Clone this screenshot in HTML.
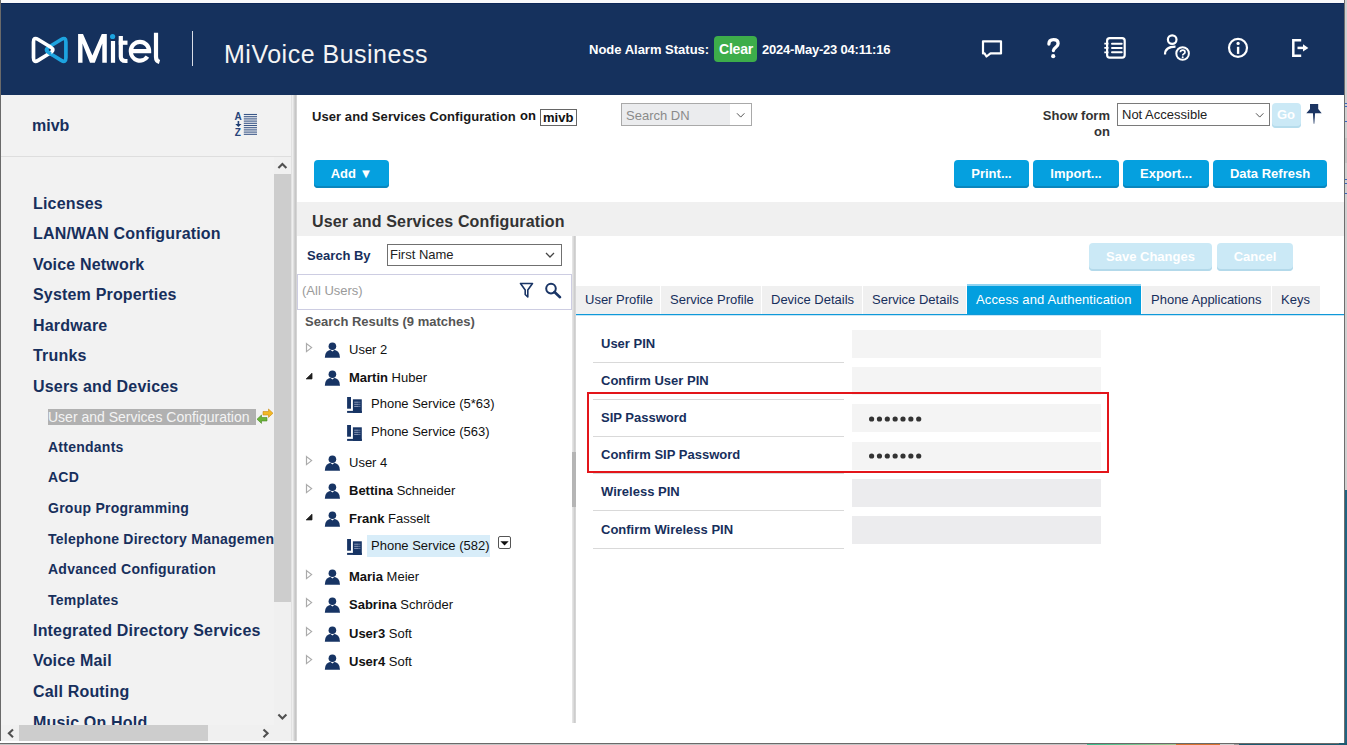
<!DOCTYPE html>
<html><head><meta charset="utf-8">
<style>
*{box-sizing:border-box;margin:0;padding:0}
html,body{width:1347px;height:745px;overflow:hidden;background:#fff;font-family:"Liberation Sans",sans-serif;position:relative}
.a{position:absolute}
.t{position:absolute;white-space:nowrap;line-height:1}
</style></head><body>
<div class="a" style="left:0px;top:0px;width:1347px;height:3px;background:#f8f8fa"></div>
<div class="a" style="left:1px;top:3px;width:1343px;height:92px;background:#15315d"></div>
<div class="a" style="left:1px;top:3px;width:1343px;height:1px;background:#0b2657"></div>
<div class="a" style="left:0px;top:0px;width:1px;height:745px;background:#6a6a6a"></div>
<div class="a" style="left:1344px;top:0px;width:1px;height:745px;background:#6e6e6e"></div>
<div class="a" style="left:1345px;top:0px;width:2px;height:745px;background:#d0d0d0"></div>
<div class="a" style="left:1345px;top:138px;width:2px;height:25px;background:#c2c2c2"></div>
<div class="a" style="left:1345px;top:103px;width:2px;height:1px;background:#3a66c0"></div>
<div class="a" style="left:1345px;top:106px;width:2px;height:1px;background:#3a66c0"></div>
<div class="a" style="left:1345px;top:121px;width:2px;height:1px;background:#3a66c0"></div>
<div class="a" style="left:1345px;top:179px;width:2px;height:1px;background:#3a66c0"></div>
<div class="a" style="left:1345px;top:183px;width:2px;height:1px;background:#3a66c0"></div>
<div class="a" style="left:1345px;top:193px;width:2px;height:1px;background:#3a66c0"></div>
<div class="a" style="left:1345px;top:490px;width:2px;height:255px;background:#1f6380"></div>
<svg class="a" style="left:28px;top:32px" width="44" height="34" viewBox="0 0 44 34">
<path d="M37.90,10.10 L37.90,25.70 Q37.90,31.20 33.21,28.33 L20.89,20.77 Q16.20,17.90 20.89,15.03 L33.21,7.47 Q37.90,4.60 37.90,10.10 Z" fill="none" stroke="#1da4e0" stroke-width="3.7"/>
<path d="M10.19,7.47 L22.51,15.03 Q27.20,17.90 22.51,20.77 L10.19,28.33 Q5.50,31.20 5.50,25.70 L5.50,10.10 Q5.50,4.60 10.19,7.47 Z" fill="none" stroke="#fff" stroke-width="3.7"/>
<clipPath id="lc"><rect x="12" y="17.6" width="11.5" height="10"/></clipPath><path d="M37.90,10.10 L37.90,25.70 Q37.90,31.20 33.21,28.33 L20.89,20.77 Q16.20,17.90 20.89,15.03 L33.21,7.47 Q37.90,4.60 37.90,10.10 Z" fill="none" stroke="#1da4e0" stroke-width="3.7" clip-path="url(#lc)"/>
</svg>
<svg class="a" style="left:74px;top:28px" width="92" height="40" viewBox="0 0 92 40">
<path d="M4.1,34.8 V6.1 H9 L18.4,27.5 L27.8,6.1 H32.8 V34.8 H28.3 V15.5 L20.8,34.8 H16 L8.5,15.5 V34.8 Z" fill="#fff"/>
<g fill="none" stroke="#fff" stroke-width="4.2">
<path d="M39,13 V34.8"/>
<path d="M46.8,8 V28.5 Q46.8,33 51.5,33 H53.5"/>
<path d="M44.8,14.7 H53.5"/>
<path d="M56.8,23.2 H75.1 A9.15,9.4 0 0 0 56.8,23.2 A9.15,9.4 0 0 0 73.45,28.6"/>
<path d="M82,4.8 V29 Q82,33 85.5,34"/>
</g>
<circle cx="38.6" cy="8.5" r="2.6" fill="#1da4e0"/>
</svg>
<div class="a" style="left:192px;top:31px;width:1px;height:35px;background:#d8dde6"></div>
<div class="t" style="left:224px;top:42px;font-size:25px;color:#f4f4f4;letter-spacing:0.5px">MiVoice Business</div>
<div class="t" style="left:589px;top:43px;font-size:13px;color:#fff;font-weight:bold;">Node Alarm Status:</div>
<div class="a" style="left:714px;top:36px;width:43px;height:26px;background:#3dad4a;border-radius:4px"></div>
<div class="t" style="left:719px;top:42px;font-size:14px;color:#fff;font-weight:bold;letter-spacing:-0.2px">Clear</div>
<div class="t" style="left:762px;top:43px;font-size:13px;color:#fff;font-weight:bold;letter-spacing:-0.2px">2024-May-23 04:11:16</div>
<svg class="a" style="left:970px;top:28px" width="350" height="40" viewBox="970 28 350 40">
<g fill="none" stroke="#fff" stroke-width="2.2">
<path d="M984.5,53.4 H983 V41.3 H1001 V53.4 H990.5 L986.5,56.5 Z" stroke-linejoin="round"/>
<rect x="1107.1" y="38.1" width="17.6" height="19.6" rx="2.6"/>
<path d="M1112,43.7 H1121.7 M1112,47.9 H1121.7 M1112,52.3 H1121.7" stroke-width="2" stroke-linecap="round"/>
<path d="M1104.3,43.7 H1108.5 M1104.3,47.9 H1108.5 M1104.3,52.3 H1108.5" stroke-width="1.8"/>
<circle cx="1172.2" cy="39.6" r="4.3"/>
<path d="M1165,54.5 Q1165,46.6 1175.5,46.6"/>
<circle cx="1182.6" cy="53.5" r="6.3" stroke-width="2"/>
<circle cx="1238" cy="47.85" r="9" />
<path d="M1238.1,46.8 V53.9" stroke-width="2.4"/>
<path d="M1301.2,40.2 H1293.3 V55.8 H1301.2" stroke-width="2.5"/>
<path d="M1297.5,47.9 H1304.5" stroke-width="2.5"/>
</g>
<g fill="#fff">
<circle cx="1238.1" cy="43.4" r="1.6"/>
<path d="M1303,44.3 L1308.4,47.9 L1303,51.5 Z"/>
<circle cx="1182.7" cy="57.2" r="1"/>
</g>
<path d="M1180.4,52.3 Q1180.4,50.2 1182.7,50.2 Q1185,50.2 1185,52.2 Q1185,53.4 1183.6,54 Q1182.7,54.4 1182.7,55.5" fill="none" stroke="#fff" stroke-width="1.7"/>
</svg>
<svg class="a" style="left:1040px;top:34px" width="28" height="28" viewBox="1040 34 28 28"><path d="M1048.9,44 Q1048.9,39.6 1053.5,39.6 Q1058.1,39.6 1058.1,43.4 Q1058.1,45.5 1055.8,47.3 Q1053.4,49.2 1053.4,50.4 V50.6" fill="none" stroke="#fff" stroke-width="3.3" stroke-linecap="round"/><circle cx="1053.2" cy="56.2" r="2.1" fill="#fff"/></svg>
<div class="a" style="left:1px;top:95px;width:291px;height:646px;background:#f2f2f2"></div>
<div class="a" style="left:1px;top:156px;width:290px;height:1px;background:#dedede"></div>
<div class="t" style="left:32px;top:118px;font-size:16px;color:#172f5c;font-weight:bold;">mivb</div>
<svg class="a" style="left:232px;top:110px" width="28" height="28" viewBox="232 110 28 28">
<text x="234.6" y="120" font-family="Liberation Sans" font-weight="bold" font-size="10" fill="#27457a">A</text>
<text x="234.8" y="136" font-family="Liberation Sans" font-weight="bold" font-size="10" fill="#27457a">Z</text>
<path d="M238.4,121 V124.5" stroke="#27457a" stroke-width="1.6"/>
<path d="M235.3,124 H241.5 L238.4,127 Z" fill="#1c3a70"/>
<g stroke="#3a5788" stroke-width="1.1">
<path d="M243.8,114.5 H257"/><path d="M243.8,116.7 H257"/><path d="M243.8,118.9 H257"/><path d="M243.8,121.1 H257"/><path d="M243.8,123.3 H257"/><path d="M243.8,125.5 H257"/><path d="M243.8,127.7 H257"/><path d="M243.8,129.9 H257"/><path d="M243.8,132.1 H257"/><path d="M243.8,134.3 H257"/>
</g></svg>
<div class="a" style="left:1px;top:157px;width:273px;height:568px;overflow:hidden">
<div class="t" style="left:32px;top:39px;font-size:16px;color:#172f5c;font-weight:bold;letter-spacing:0.18px">Licenses</div>
<div class="t" style="left:32px;top:69px;font-size:16px;color:#172f5c;font-weight:bold;letter-spacing:0.18px">LAN/WAN Configuration</div>
<div class="t" style="left:32px;top:100px;font-size:16px;color:#172f5c;font-weight:bold;letter-spacing:0.18px">Voice Network</div>
<div class="t" style="left:32px;top:130px;font-size:16px;color:#172f5c;font-weight:bold;letter-spacing:0.18px">System Properties</div>
<div class="t" style="left:32px;top:161px;font-size:16px;color:#172f5c;font-weight:bold;letter-spacing:0.18px">Hardware</div>
<div class="t" style="left:32px;top:191px;font-size:16px;color:#172f5c;font-weight:bold;letter-spacing:0.18px">Trunks</div>
<div class="t" style="left:32px;top:222px;font-size:16px;color:#172f5c;font-weight:bold;letter-spacing:0.18px">Users and Devices</div>
<div class="a" style="left:47px;top:252px;width:208px;height:16px;background:#b1b1b1"></div>
<div class="t" style="left:47px;top:253px;font-size:14px;color:#f4f4f4">User and Services Configuration</div>
<svg class="a" style="left:255px;top:251px" width="18" height="18" viewBox="0 0 18 18">
<path d="M7,3.5 H12.5 V1 L17,5.2 L12.5,9.4 V7 H7 Z" fill="#f2b826" stroke="#c98a10" stroke-width="0.6"/>
<path d="M11,9.5 H5.5 V7 L1,11.2 L5.5,15.4 V13 H11 Z" fill="#6bb33a" stroke="#4a8a22" stroke-width="0.6"/>
</svg>
<div class="t" style="left:47px;top:283px;font-size:14px;color:#172f5c;font-weight:bold;letter-spacing:0.25px">Attendants</div>
<div class="t" style="left:47px;top:313px;font-size:14px;color:#172f5c;font-weight:bold;letter-spacing:0.25px">ACD</div>
<div class="t" style="left:47px;top:344px;font-size:14px;color:#172f5c;font-weight:bold;letter-spacing:0.25px">Group Programming</div>
<div class="t" style="left:47px;top:375px;font-size:14px;color:#172f5c;font-weight:bold;letter-spacing:0.25px">Telephone Directory Management</div>
<div class="t" style="left:47px;top:405px;font-size:14px;color:#172f5c;font-weight:bold;letter-spacing:0.25px">Advanced Configuration</div>
<div class="t" style="left:47px;top:436px;font-size:14px;color:#172f5c;font-weight:bold;letter-spacing:0.25px">Templates</div>
<div class="t" style="left:32px;top:466px;font-size:16px;color:#172f5c;font-weight:bold;letter-spacing:0.18px">Integrated Directory Services</div>
<div class="t" style="left:32px;top:496px;font-size:16px;color:#172f5c;font-weight:bold;letter-spacing:0.18px">Voice Mail</div>
<div class="t" style="left:32px;top:527px;font-size:16px;color:#172f5c;font-weight:bold;letter-spacing:0.18px">Call Routing</div>
<div class="t" style="left:32px;top:558px;font-size:16px;color:#172f5c;font-weight:bold;letter-spacing:0.18px">Music On Hold</div>
</div>
<div class="a" style="left:274px;top:157px;width:17px;height:568px;background:#f0f0f0"></div>
<div class="a" style="left:274px;top:174px;width:17px;height:428px;background:#cdcdcd"></div>
<svg class="a" style="left:274px;top:157px" width="17" height="568" viewBox="0 0 17 568">
<path d="M4.4,10.9 L8.4,6.9 L12.4,10.9" fill="none" stroke="#505050" stroke-width="2.1"/>
<path d="M4.4,557.6 L8.4,561.6 L12.4,557.6" fill="none" stroke="#505050" stroke-width="2.1"/>
</svg>
<div class="a" style="left:1px;top:725px;width:273px;height:16px;background:#f0f0f0"></div>
<div class="a" style="left:19px;top:725px;width:189px;height:16px;background:#cdcdcd"></div>
<svg class="a" style="left:1px;top:725px" width="273" height="16" viewBox="0 0 273 16">
<path d="M12,4.4 L7.9,8.3 L12,12.2" fill="none" stroke="#505050" stroke-width="2.1"/>
<path d="M262.5,4.4 L266.6,8.3 L262.5,12.2" fill="none" stroke="#505050" stroke-width="2.1"/>
</svg>
<div class="a" style="left:274px;top:725px;width:17px;height:16px;background:#f0f0f0"></div>
<div class="a" style="left:291px;top:95px;width:1px;height:648px;background:#e2e2e2"></div>
<div class="a" style="left:292px;top:95px;width:1px;height:648px;background:#eeeeee"></div>
<div class="a" style="left:293px;top:95px;width:1px;height:648px;background:#e0e0e0"></div>
<div class="a" style="left:294px;top:95px;width:1px;height:648px;background:#d0d0d0"></div>
<div class="a" style="left:295px;top:95px;width:1px;height:648px;background:#c6c6c6"></div>
<div class="a" style="left:296px;top:95px;width:1px;height:648px;background:#d4d4d4"></div>
<div class="t" style="left:312px;top:110px;font-size:13px;color:#1a1a1a;font-weight:bold;letter-spacing:0.07px">User and Services Configuration</div>
<div class="t" style="left:520px;top:109px;font-size:13px;color:#111;font-weight:bold;">on</div>
<div class="a" style="left:540px;top:109px;width:37px;height:17px;border:1px solid #666"></div>
<div class="t" style="left:543px;top:111px;font-size:13px;color:#111;font-weight:bold;">mivb</div>
<div class="a" style="left:621px;top:103px;width:131px;height:23px;border:1px solid #a9a9a9;background:#fff"></div>
<div class="a" style="left:622px;top:104px;width:108px;height:21px;background:#ebecee"></div>
<div class="t" style="left:626px;top:109px;font-size:13px;color:#8a8a8a;">Search DN</div>
<svg class="a" style="left:734px;top:110px" width="12" height="10" viewBox="0 0 12 10"><path d="M3,3.3 L6.7,7.1 L10.4,3.3" fill="none" stroke="#555" stroke-width="1"/></svg>
<div class="t" style="left:1010px;top:108px;width:100px;text-align:right;font-size:13px;line-height:16px;color:#333;font-weight:bold;white-space:normal">Show form<br>on</div>
<div class="a" style="left:1117px;top:103px;width:153px;height:23px;border:1px solid #7a7a7a;background:#fff"></div>
<div class="t" style="left:1122px;top:108px;font-size:13px;color:#222;">Not Accessible</div>
<svg class="a" style="left:1253px;top:110px" width="12" height="10" viewBox="0 0 12 10"><path d="M3,3.3 L6.7,7.1 L10.4,3.3" fill="none" stroke="#555" stroke-width="1"/></svg>
<div class="a" style="left:1272px;top:103px;width:29px;height:25px;background:#cbe9f6;border-radius:4px;box-shadow:inset 0 -2px 0 #b6dcec"></div>
<div class="t" style="left:1277px;top:108px;font-size:13px;color:#fff;font-weight:bold;">Go</div>
<svg class="a" style="left:1302px;top:100px" width="24" height="28" viewBox="1302 100 24 28">
<path d="M1310,104.1 H1318.2 V109 L1321.7,113.3 H1306.3 L1310,109 Z" fill="#1c3563"/>
<path d="M1312.9,113 H1315.1 L1314.3,123.7 H1313.7 Z" fill="#1c3563"/>
</svg>
<div class="a" style="left:314px;top:160px;width:75px;height:28px;background:#05a0df;border-radius:4px;box-shadow:inset 0 -2px 0 #0a86bd;color:#fff;font-weight:bold;font-size:13px;line-height:27px;text-align:center;white-space:nowrap">Add &#9660;</div>
<div class="a" style="left:954px;top:160px;width:75px;height:28px;background:#05a0df;border-radius:4px;box-shadow:inset 0 -2px 0 #0a86bd;color:#fff;font-weight:bold;font-size:13px;line-height:27px;text-align:center;white-space:nowrap">Print...</div>
<div class="a" style="left:1033px;top:160px;width:86px;height:28px;background:#05a0df;border-radius:4px;box-shadow:inset 0 -2px 0 #0a86bd;color:#fff;font-weight:bold;font-size:13px;line-height:27px;text-align:center;white-space:nowrap">Import...</div>
<div class="a" style="left:1123px;top:160px;width:86px;height:28px;background:#05a0df;border-radius:4px;box-shadow:inset 0 -2px 0 #0a86bd;color:#fff;font-weight:bold;font-size:13px;line-height:27px;text-align:center;white-space:nowrap">Export...</div>
<div class="a" style="left:1213px;top:160px;width:114px;height:28px;background:#05a0df;border-radius:4px;box-shadow:inset 0 -2px 0 #0a86bd;color:#fff;font-weight:bold;font-size:13px;line-height:27px;text-align:center;white-space:nowrap">Data Refresh</div>
<div class="a" style="left:297px;top:202px;width:1047px;height:34px;background:#f0f0f0"></div>
<div class="t" style="left:312px;top:214px;font-size:16px;color:#333;font-weight:bold;letter-spacing:0.15px">User and Services Configuration</div>
<div class="t" style="left:307px;top:249px;font-size:13px;color:#172f5c;font-weight:bold;">Search By</div>
<div class="a" style="left:387px;top:244px;width:175px;height:22px;border:1px solid #707070;background:#fff"></div>
<div class="t" style="left:390px;top:248px;font-size:13px;color:#222;">First Name</div>
<svg class="a" style="left:544px;top:250px" width="12" height="10" viewBox="0 0 12 10"><path d="M2,3 L6,7 L10,3" fill="none" stroke="#444" stroke-width="1.3"/></svg>
<div class="a" style="left:297px;top:274px;width:275px;height:36px;border:1px solid #cdcde2;background:#fff"></div>
<div class="t" style="left:302px;top:284px;font-size:13px;color:#9a9a9a;">(All Users)</div>
<svg class="a" style="left:516px;top:280px" width="50" height="22" viewBox="516 280 50 22">
<path d="M520.5,283.5 H532.5 L527.8,290 V297 L525.2,294.5 V290 Z" fill="none" stroke="#1a3566" stroke-width="1.6" stroke-linejoin="round"/>
<circle cx="551" cy="288.6" r="4.8" fill="none" stroke="#1a3566" stroke-width="2"/>
<path d="M554.5,292 L560,297.2" stroke="#1a3566" stroke-width="2.6" stroke-linecap="round"/>
</svg>
<div class="t" style="left:305px;top:315px;font-size:13px;color:#555;font-weight:bold;">Search Results (9 matches)</div>
<svg class="a" style="left:304px;top:341px" width="10" height="13" viewBox="304 341 10 13"><path d="M306.5,343.6 L311.6,347.6 L306.5,351.6 Z" fill="none" stroke="#aaaaaa" stroke-width="1.2"/></svg>
<svg class="a" style="left:323px;top:341px" width="19" height="19" viewBox="323 341 19 19">
<circle cx="332.4" cy="346.3" r="3.8" fill="#173464"/>
<path d="M324.8,357.8 Q324.8,349.8 332.4,349.8 Q340,349.8 340,357.8 Z" fill="#173464"/>
<path d="M330.6,349.9 L332.4,351.6 L334.2,349.9 Z" fill="#fff"/>
</svg>
<div class="t" style="left:349px;top:343px;font-size:13px;color:#111;">User 2</div>
<svg class="a" style="left:304px;top:370px" width="10" height="12" viewBox="304 370 10 12"><path d="M312,373.2 V378.9 H306.2 Z" fill="#1e1e1e" stroke="#1e1e1e" stroke-width="0.8" stroke-linejoin="round"/></svg>
<svg class="a" style="left:323px;top:369px" width="19" height="19" viewBox="323 341 19 19">
<circle cx="332.4" cy="346.3" r="3.8" fill="#173464"/>
<path d="M324.8,357.8 Q324.8,349.8 332.4,349.8 Q340,349.8 340,357.8 Z" fill="#173464"/>
<path d="M330.6,349.9 L332.4,351.6 L334.2,349.9 Z" fill="#fff"/>
</svg>
<div class="t" style="left:349px;top:371px;font-size:13px;color:#111;"><b>Martin</b> Huber</div>
<svg class="a" style="left:345px;top:395px" width="19" height="20" viewBox="345 395 19 20">
<rect x="347.1" y="397" width="3.9" height="11.7" fill="#173464"/>
<rect x="352.9" y="399.3" width="8.9" height="13.6" fill="#173464"/>
<rect x="347.1" y="410.9" width="14.7" height="2" fill="#173464"/>
<g fill="#8b9ab8"><rect x="354.2" y="401.7" width="4.5" height="1"/><rect x="359.3" y="401.7" width="1" height="1"/><rect x="354.2" y="403.8" width="4.5" height="1"/><rect x="359.3" y="403.8" width="1" height="1"/><rect x="354.2" y="405.9" width="4.5" height="1"/><rect x="359.3" y="405.9" width="1" height="1"/></g>
</svg>
<div class="t" style="left:371px;top:397px;font-size:13px;color:#111;">Phone Service (5*63)</div>
<svg class="a" style="left:345px;top:423px" width="19" height="20" viewBox="345 395 19 20">
<rect x="347.1" y="397" width="3.9" height="11.7" fill="#173464"/>
<rect x="352.9" y="399.3" width="8.9" height="13.6" fill="#173464"/>
<rect x="347.1" y="410.9" width="14.7" height="2" fill="#173464"/>
<g fill="#8b9ab8"><rect x="354.2" y="401.7" width="4.5" height="1"/><rect x="359.3" y="401.7" width="1" height="1"/><rect x="354.2" y="403.8" width="4.5" height="1"/><rect x="359.3" y="403.8" width="1" height="1"/><rect x="354.2" y="405.9" width="4.5" height="1"/><rect x="359.3" y="405.9" width="1" height="1"/></g>
</svg>
<div class="t" style="left:371px;top:425px;font-size:13px;color:#111;">Phone Service (563)</div>
<svg class="a" style="left:304px;top:454px" width="10" height="13" viewBox="304 341 10 13"><path d="M306.5,343.6 L311.6,347.6 L306.5,351.6 Z" fill="none" stroke="#aaaaaa" stroke-width="1.2"/></svg>
<svg class="a" style="left:323px;top:454px" width="19" height="19" viewBox="323 341 19 19">
<circle cx="332.4" cy="346.3" r="3.8" fill="#173464"/>
<path d="M324.8,357.8 Q324.8,349.8 332.4,349.8 Q340,349.8 340,357.8 Z" fill="#173464"/>
<path d="M330.6,349.9 L332.4,351.6 L334.2,349.9 Z" fill="#fff"/>
</svg>
<div class="t" style="left:349px;top:456px;font-size:13px;color:#111;">User 4</div>
<svg class="a" style="left:304px;top:482px" width="10" height="13" viewBox="304 341 10 13"><path d="M306.5,343.6 L311.6,347.6 L306.5,351.6 Z" fill="none" stroke="#aaaaaa" stroke-width="1.2"/></svg>
<svg class="a" style="left:323px;top:482px" width="19" height="19" viewBox="323 341 19 19">
<circle cx="332.4" cy="346.3" r="3.8" fill="#173464"/>
<path d="M324.8,357.8 Q324.8,349.8 332.4,349.8 Q340,349.8 340,357.8 Z" fill="#173464"/>
<path d="M330.6,349.9 L332.4,351.6 L334.2,349.9 Z" fill="#fff"/>
</svg>
<div class="t" style="left:349px;top:484px;font-size:13px;color:#111;"><b>Bettina</b> Schneider</div>
<svg class="a" style="left:304px;top:511px" width="10" height="12" viewBox="304 370 10 12"><path d="M312,373.2 V378.9 H306.2 Z" fill="#1e1e1e" stroke="#1e1e1e" stroke-width="0.8" stroke-linejoin="round"/></svg>
<svg class="a" style="left:323px;top:510px" width="19" height="19" viewBox="323 341 19 19">
<circle cx="332.4" cy="346.3" r="3.8" fill="#173464"/>
<path d="M324.8,357.8 Q324.8,349.8 332.4,349.8 Q340,349.8 340,357.8 Z" fill="#173464"/>
<path d="M330.6,349.9 L332.4,351.6 L334.2,349.9 Z" fill="#fff"/>
</svg>
<div class="t" style="left:349px;top:512px;font-size:13px;color:#111;"><b>Frank</b> Fasselt</div>
<div class="a" style="left:367px;top:535px;width:123px;height:22px;background:#d8edf9"></div>
<svg class="a" style="left:345px;top:537px" width="19" height="20" viewBox="345 395 19 20">
<rect x="347.1" y="397" width="3.9" height="11.7" fill="#173464"/>
<rect x="352.9" y="399.3" width="8.9" height="13.6" fill="#173464"/>
<rect x="347.1" y="410.9" width="14.7" height="2" fill="#173464"/>
<g fill="#8b9ab8"><rect x="354.2" y="401.7" width="4.5" height="1"/><rect x="359.3" y="401.7" width="1" height="1"/><rect x="354.2" y="403.8" width="4.5" height="1"/><rect x="359.3" y="403.8" width="1" height="1"/><rect x="354.2" y="405.9" width="4.5" height="1"/><rect x="359.3" y="405.9" width="1" height="1"/></g>
</svg>
<div class="t" style="left:371px;top:539px;font-size:13px;color:#111;">Phone Service (582)</div>
<svg class="a" style="left:304px;top:568px" width="10" height="13" viewBox="304 341 10 13"><path d="M306.5,343.6 L311.6,347.6 L306.5,351.6 Z" fill="none" stroke="#aaaaaa" stroke-width="1.2"/></svg>
<svg class="a" style="left:323px;top:568px" width="19" height="19" viewBox="323 341 19 19">
<circle cx="332.4" cy="346.3" r="3.8" fill="#173464"/>
<path d="M324.8,357.8 Q324.8,349.8 332.4,349.8 Q340,349.8 340,357.8 Z" fill="#173464"/>
<path d="M330.6,349.9 L332.4,351.6 L334.2,349.9 Z" fill="#fff"/>
</svg>
<div class="t" style="left:349px;top:570px;font-size:13px;color:#111;"><b>Maria</b> Meier</div>
<svg class="a" style="left:304px;top:596px" width="10" height="13" viewBox="304 341 10 13"><path d="M306.5,343.6 L311.6,347.6 L306.5,351.6 Z" fill="none" stroke="#aaaaaa" stroke-width="1.2"/></svg>
<svg class="a" style="left:323px;top:596px" width="19" height="19" viewBox="323 341 19 19">
<circle cx="332.4" cy="346.3" r="3.8" fill="#173464"/>
<path d="M324.8,357.8 Q324.8,349.8 332.4,349.8 Q340,349.8 340,357.8 Z" fill="#173464"/>
<path d="M330.6,349.9 L332.4,351.6 L334.2,349.9 Z" fill="#fff"/>
</svg>
<div class="t" style="left:349px;top:598px;font-size:13px;color:#111;"><b>Sabrina</b> Schr&ouml;der</div>
<svg class="a" style="left:304px;top:625px" width="10" height="13" viewBox="304 341 10 13"><path d="M306.5,343.6 L311.6,347.6 L306.5,351.6 Z" fill="none" stroke="#aaaaaa" stroke-width="1.2"/></svg>
<svg class="a" style="left:323px;top:625px" width="19" height="19" viewBox="323 341 19 19">
<circle cx="332.4" cy="346.3" r="3.8" fill="#173464"/>
<path d="M324.8,357.8 Q324.8,349.8 332.4,349.8 Q340,349.8 340,357.8 Z" fill="#173464"/>
<path d="M330.6,349.9 L332.4,351.6 L334.2,349.9 Z" fill="#fff"/>
</svg>
<div class="t" style="left:349px;top:627px;font-size:13px;color:#111;"><b>User3</b> Soft</div>
<svg class="a" style="left:304px;top:653px" width="10" height="13" viewBox="304 341 10 13"><path d="M306.5,343.6 L311.6,347.6 L306.5,351.6 Z" fill="none" stroke="#aaaaaa" stroke-width="1.2"/></svg>
<svg class="a" style="left:323px;top:653px" width="19" height="19" viewBox="323 341 19 19">
<circle cx="332.4" cy="346.3" r="3.8" fill="#173464"/>
<path d="M324.8,357.8 Q324.8,349.8 332.4,349.8 Q340,349.8 340,357.8 Z" fill="#173464"/>
<path d="M330.6,349.9 L332.4,351.6 L334.2,349.9 Z" fill="#fff"/>
</svg>
<div class="t" style="left:349px;top:655px;font-size:13px;color:#111;"><b>User4</b> Soft</div>
<svg class="a" style="left:497px;top:536px" width="15" height="14" viewBox="497 536 15 14">
<rect x="498.5" y="536.5" width="12" height="12" rx="1.5" fill="#fff" stroke="#555" stroke-width="1"/>
<path d="M500.4,541.2 H508.7 L504.55,545.4 Z" fill="#111"/>
</svg>
<div class="a" style="left:572px;top:236px;width:1px;height:487px;background:#e4e4e4"></div>
<div class="a" style="left:573px;top:236px;width:1px;height:487px;background:#dadada"></div>
<div class="a" style="left:574px;top:236px;width:1px;height:487px;background:#cdcdcd"></div>
<div class="a" style="left:575px;top:236px;width:1px;height:487px;background:#d6d6d6"></div>
<div class="a" style="left:572px;top:452px;width:4px;height:55px;background:#b5b5b5"></div>
<div class="a" style="left:1089px;top:243px;width:123px;height:28px;background:#cbe9f6;border-radius:4px;box-shadow:inset 0 -2px 0 #b3d9ea;color:#fff;font-weight:bold;font-size:13px;line-height:27px;text-align:center;white-space:nowrap">Save Changes</div>
<div class="a" style="left:1217px;top:243px;width:76px;height:28px;background:#cbe9f6;border-radius:4px;box-shadow:inset 0 -2px 0 #b3d9ea;color:#fff;font-weight:bold;font-size:13px;line-height:27px;text-align:center;white-space:nowrap">Cancel</div>
<div class="a" style="left:576px;top:286px;width:84px;height:28px;background:#f0f0f0"></div>
<div class="t" style="left:585px;top:293px;font-size:13px;color:#172f5c">User Profile</div>
<div class="a" style="left:661px;top:286px;width:100px;height:28px;background:#f0f0f0"></div>
<div class="t" style="left:670px;top:293px;font-size:13px;color:#172f5c">Service Profile</div>
<div class="a" style="left:762px;top:286px;width:100px;height:28px;background:#f0f0f0"></div>
<div class="t" style="left:771px;top:293px;font-size:13px;color:#172f5c">Device Details</div>
<div class="a" style="left:863px;top:286px;width:103px;height:28px;background:#f0f0f0"></div>
<div class="t" style="left:872px;top:293px;font-size:13px;color:#172f5c">Service Details</div>
<div class="a" style="left:967px;top:284px;width:174px;height:30px;background:#039fdf;border-top:2px solid #8fd3f1"></div>
<div class="t" style="left:976px;top:293px;font-size:13px;color:#fff;letter-spacing:0.12px">Access and Authentication</div>
<div class="a" style="left:1142px;top:286px;width:129px;height:28px;background:#f0f0f0"></div>
<div class="t" style="left:1151px;top:293px;font-size:13px;color:#172f5c">Phone Applications</div>
<div class="a" style="left:1272px;top:286px;width:48px;height:28px;background:#f0f0f0"></div>
<div class="t" style="left:1281px;top:293px;font-size:13px;color:#172f5c">Keys</div>
<div class="a" style="left:576px;top:314px;width:768px;height:1px;background:#0f99d9"></div>
<div class="a" style="left:576px;top:315px;width:768px;height:1px;background:#c6e6f6"></div>
<div class="t" style="left:601px;top:337px;font-size:13px;color:#172f5c;font-weight:bold;">User PIN</div>
<div class="a" style="left:593px;top:362px;width:251px;height:1px;background:#d9d9d9"></div>
<div class="a" style="left:852px;top:330px;width:249px;height:28px;background:#f4f4f4"></div>
<div class="t" style="left:601px;top:374px;font-size:13px;color:#172f5c;font-weight:bold;">Confirm User PIN</div>
<div class="a" style="left:593px;top:399px;width:251px;height:1px;background:#d9d9d9"></div>
<div class="a" style="left:852px;top:367px;width:249px;height:28px;background:#f4f4f4"></div>
<div class="t" style="left:601px;top:411px;font-size:13px;color:#172f5c;font-weight:bold;">SIP Password</div>
<div class="a" style="left:593px;top:436px;width:251px;height:1px;background:#d9d9d9"></div>
<div class="a" style="left:852px;top:404px;width:249px;height:28px;background:#f4f4f4"></div>
<div class="t" style="left:601px;top:448px;font-size:13px;color:#172f5c;font-weight:bold;">Confirm SIP Password</div>
<div class="a" style="left:593px;top:473px;width:251px;height:1px;background:#d9d9d9"></div>
<div class="a" style="left:852px;top:442px;width:249px;height:28px;background:#f4f4f4"></div>
<div class="t" style="left:601px;top:485px;font-size:13px;color:#172f5c;font-weight:bold;">Wireless PIN</div>
<div class="a" style="left:593px;top:510px;width:251px;height:1px;background:#d9d9d9"></div>
<div class="a" style="left:852px;top:479px;width:249px;height:28px;background:#ececee"></div>
<div class="t" style="left:601px;top:523px;font-size:13px;color:#172f5c;font-weight:bold;">Confirm Wireless PIN</div>
<div class="a" style="left:593px;top:548px;width:251px;height:1px;background:#d9d9d9"></div>
<div class="a" style="left:852px;top:516px;width:249px;height:28px;background:#ececee"></div>
<svg class="a" style="left:866px;top:414px" width="62" height="10" viewBox="0 0 62 10"><circle cx="5.60" cy="5" r="2.6" fill="#333"/><circle cx="13.45" cy="5" r="2.6" fill="#333"/><circle cx="21.30" cy="5" r="2.6" fill="#333"/><circle cx="29.15" cy="5" r="2.6" fill="#333"/><circle cx="37.00" cy="5" r="2.6" fill="#333"/><circle cx="44.85" cy="5" r="2.6" fill="#333"/><circle cx="52.70" cy="5" r="2.6" fill="#333"/></svg>
<svg class="a" style="left:866px;top:451px" width="62" height="10" viewBox="0 0 62 10"><circle cx="5.60" cy="5" r="2.6" fill="#333"/><circle cx="13.45" cy="5" r="2.6" fill="#333"/><circle cx="21.30" cy="5" r="2.6" fill="#333"/><circle cx="29.15" cy="5" r="2.6" fill="#333"/><circle cx="37.00" cy="5" r="2.6" fill="#333"/><circle cx="44.85" cy="5" r="2.6" fill="#333"/><circle cx="52.70" cy="5" r="2.6" fill="#333"/></svg>
<div class="a" style="left:587px;top:392px;width:522px;height:81px;border:2px solid #e3151a"></div>
<div class="a" style="left:0px;top:741px;width:1344px;height:2px;background:#fff"></div>
<div class="a" style="left:0px;top:743px;width:1344px;height:1px;background:#6a6a6a"></div>
<div class="a" style="left:0px;top:744px;width:1087px;height:1px;background:#c4c4c4"></div>
<div class="a" style="left:1087px;top:744px;width:89px;height:1px;background:linear-gradient(90deg,#36bf8c,#a8c890)"></div>
<div class="a" style="left:1176px;top:744px;width:44px;height:1px;background:#d8722e"></div>
<div class="a" style="left:1220px;top:744px;width:14px;height:1px;background:#cfcfcf"></div>
<div class="a" style="left:1234px;top:744px;width:5px;height:1px;background:#9a9a9a"></div>
<div class="a" style="left:1239px;top:744px;width:108px;height:1px;background:#1d5a70"></div>
<div class="a" style="left:1339px;top:743px;width:8px;height:1px;background:#1d5a70"></div>
</body></html>
